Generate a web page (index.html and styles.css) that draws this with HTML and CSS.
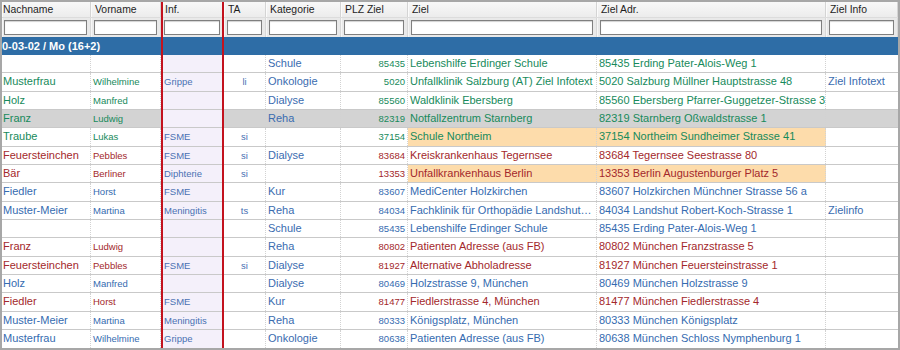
FILE: index.html
```html
<!DOCTYPE html>
<html>
<head>
<meta charset="utf-8">
<link rel="stylesheet" href="styles.css">
</head>
<body>
<div class="grid">
  <div class="row head">
    <div class="h first">Nachname</div>
    <div class="h">Vorname</div>
    <div class="h">Inf.</div>
    <div class="h">TA</div>
    <div class="h">Kategorie</div>
    <div class="h">PLZ Ziel</div>
    <div class="h">Ziel</div>
    <div class="h">Ziel Adr.</div>
    <div class="h">Ziel Info</div>
  </div>
  <div class="row filters">
    <div class="f first"><input type="text"></div>
    <div class="f"><input type="text"></div>
    <div class="f"><input type="text"></div>
    <div class="f"><input type="text"></div>
    <div class="f"><input type="text"></div>
    <div class="f"><input type="text"></div>
    <div class="f"><input type="text"></div>
    <div class="f"><input type="text"></div>
    <div class="f"><input type="text"></div>
  </div>
  <div class="group">0-03-02 / Mo (16+2)</div>

  <div class="row green">
    <div class="c name"></div><div class="c small"></div><div class="c inf"></div><div class="c ta"></div>
    <div class="c kat">Schule</div><div class="c plz">85435</div><div class="c ziel">Lebenshilfe Erdinger Schule</div><div class="c adr">85435 Erding Pater-Alois-Weg 1</div><div class="c info"></div>
  </div>
  <div class="row green">
    <div class="c name">Musterfrau</div><div class="c small">Wilhelmine</div><div class="c inf">Grippe</div><div class="c ta">li</div>
    <div class="c kat">Onkologie</div><div class="c plz">5020</div><div class="c ziel">Unfallklinik Salzburg (AT) Ziel Infotext</div><div class="c adr">5020 Salzburg Müllner Hauptstrasse 48</div><div class="c info">Ziel Infotext</div>
  </div>
  <div class="row green">
    <div class="c name">Holz</div><div class="c small">Manfred</div><div class="c inf"></div><div class="c ta"></div>
    <div class="c kat">Dialyse</div><div class="c plz">85560</div><div class="c ziel">Waldklinik Ebersberg</div><div class="c adr">85560 Ebersberg Pfarrer-Guggetzer-Strasse 3</div><div class="c info"></div>
  </div>
  <div class="row green grey">
    <div class="c name">Franz</div><div class="c small">Ludwig</div><div class="c inf"></div><div class="c ta"></div>
    <div class="c kat">Reha</div><div class="c plz">82319</div><div class="c ziel">Notfallzentrum Starnberg</div><div class="c adr">82319 Starnberg Oßwaldstrasse 1</div><div class="c info"></div>
  </div>
  <div class="row green">
    <div class="c name">Traube</div><div class="c small">Lukas</div><div class="c inf">FSME</div><div class="c ta">si</div>
    <div class="c kat"></div><div class="c plz">37154</div><div class="c ziel hl">Schule Northeim</div><div class="c adr hl">37154 Northeim Sundheimer Strasse 41</div><div class="c info"></div>
  </div>
  <div class="row red">
    <div class="c name">Feuersteinchen</div><div class="c small">Pebbles</div><div class="c inf">FSME</div><div class="c ta">si</div>
    <div class="c kat">Dialyse</div><div class="c plz">83684</div><div class="c ziel">Kreiskrankenhaus Tegernsee</div><div class="c adr">83684 Tegernsee Seestrasse 80</div><div class="c info"></div>
  </div>
  <div class="row red">
    <div class="c name">Bär</div><div class="c small">Berliner</div><div class="c inf">Diphterie</div><div class="c ta">si</div>
    <div class="c kat"></div><div class="c plz">13353</div><div class="c ziel hl">Unfallkrankenhaus Berlin</div><div class="c adr hl">13353 Berlin Augustenburger Platz 5</div><div class="c info"></div>
  </div>
  <div class="row blue">
    <div class="c name">Fiedler</div><div class="c small">Horst</div><div class="c inf">FSME</div><div class="c ta"></div>
    <div class="c kat">Kur</div><div class="c plz">83607</div><div class="c ziel">MediCenter Holzkirchen</div><div class="c adr">83607 Holzkirchen Münchner Strasse 56 a</div><div class="c info"></div>
  </div>
  <div class="row blue">
    <div class="c name">Muster-Meier</div><div class="c small">Martina</div><div class="c inf">Meningitis</div><div class="c ta">ts</div>
    <div class="c kat">Reha</div><div class="c plz">84034</div><div class="c ziel">Fachklinik für Orthopädie Landshut GmbH</div><div class="c adr">84034 Landshut Robert-Koch-Strasse 1</div><div class="c info">Zielinfo</div>
  </div>
  <div class="row blue">
    <div class="c name"></div><div class="c small"></div><div class="c inf"></div><div class="c ta"></div>
    <div class="c kat">Schule</div><div class="c plz">85435</div><div class="c ziel">Lebenshilfe Erdinger Schule</div><div class="c adr">85435 Erding Pater-Alois-Weg 1</div><div class="c info"></div>
  </div>
  <div class="row red">
    <div class="c name">Franz</div><div class="c small">Ludwig</div><div class="c inf"></div><div class="c ta"></div>
    <div class="c kat">Reha</div><div class="c plz">80802</div><div class="c ziel">Patienten Adresse (aus FB)</div><div class="c adr">80802 München Franzstrasse 5</div><div class="c info"></div>
  </div>
  <div class="row red">
    <div class="c name">Feuersteinchen</div><div class="c small">Pebbles</div><div class="c inf">FSME</div><div class="c ta">si</div>
    <div class="c kat">Dialyse</div><div class="c plz">81927</div><div class="c ziel">Alternative Abholadresse</div><div class="c adr">81927 München Feuersteinstrasse 1</div><div class="c info"></div>
  </div>
  <div class="row blue">
    <div class="c name">Holz</div><div class="c small">Manfred</div><div class="c inf"></div><div class="c ta"></div>
    <div class="c kat">Dialyse</div><div class="c plz">80469</div><div class="c ziel">Holzstrasse 9, München</div><div class="c adr">80469 München Holzstrasse 9</div><div class="c info"></div>
  </div>
  <div class="row red">
    <div class="c name">Fiedler</div><div class="c small">Horst</div><div class="c inf">FSME</div><div class="c ta"></div>
    <div class="c kat">Kur</div><div class="c plz">81477</div><div class="c ziel">Fiedlerstrasse 4, München</div><div class="c adr">81477 München Fiedlerstrasse 4</div><div class="c info"></div>
  </div>
  <div class="row blue">
    <div class="c name">Muster-Meier</div><div class="c small">Martina</div><div class="c inf">Meningitis</div><div class="c ta"></div>
    <div class="c kat">Reha</div><div class="c plz">80333</div><div class="c ziel">Königsplatz, München</div><div class="c adr">80333 München Königsplatz</div><div class="c info"></div>
  </div>
  <div class="row blue last">
    <div class="c name">Musterfrau</div><div class="c small">Wilhelmine</div><div class="c inf">Grippe</div><div class="c ta"></div>
    <div class="c kat">Onkologie</div><div class="c plz">80638</div><div class="c ziel">Patienten Adresse (aus FB)</div><div class="c adr">80638 München Schloss Nymphenburg 1</div><div class="c info"></div>
  </div>

  <div class="marker"></div>
</div>
</body>
</html>
```
FILE: styles.css
```css
html, body {
  margin: 0;
  padding: 0;
  background: #ffffff;
}

.grid {
  position: relative;
  width: 900px;
  height: 350px;
  box-sizing: border-box;
  border: 2px solid #a7a7a7;
  overflow: hidden;
  font-family: "Liberation Sans", Arial, sans-serif;
  font-size: 11px;
  background: #ffffff;
}

.row {
  display: grid;
  grid-template-columns: 89px 70px 63px 42px 75px 67px 189px 229px 72px;
  height: 18.33px;
  box-sizing: border-box;
  border-bottom: 1px solid #c9c9c9;
}

.row.last {
  border-bottom: none;
}

/* header */
.row.head {
  height: 16.33px;
  border-bottom: 1px solid #dcdcdc;
  background: linear-gradient(#f8f8f8, #ececec);
}

.h {
  font-size: 10.4px;
  line-height: 15px;
  color: #1e1e1e;
  padding-left: 4px;
  border-right: 1px solid #d4d4d4;
  box-shadow: inset 1px 0 0 #fbfbfb;
  white-space: nowrap;
  overflow: hidden;
}

.h.first {
  padding-left: 1px;
}

/* filter row */
.row.filters {
  background: #e9e9e9;
  border-bottom: none;
}

.f {
  padding: 2px 3px 0 3px;
  border-right: 1px solid #d8d8d8;
  box-shadow: inset 1px 0 0 #f6f6f6;
}

.f.first {
  padding-left: 2px;
}

.f input {
  display: block;
  width: 100%;
  height: 15px;
  box-sizing: border-box;
  margin: 0;
  padding: 0 2px;
  border: 1px solid #7f7f7f;
  border-radius: 0;
  background: #ffffff;
  box-shadow: inset 0 1px 1px rgba(0, 0, 0, 0.18);
  font: inherit;
}

/* group row */
.group {
  height: 18.33px;
  box-sizing: border-box;
  background: #2e6da6;
  color: #ffffff;
  font-weight: bold;
  font-size: 11px;
  line-height: 18px;
  padding-left: 0;
  white-space: nowrap;
}

/* data cells */
.c {
  padding: 0 2px;
  line-height: 17px;
  white-space: nowrap;
  overflow: hidden;
  border-right: 1px dotted #d2d2d2;
}

.c.ziel {
  text-overflow: ellipsis;
}

.c.adr {
  padding-right: 0;
  text-overflow: clip;
}

.c.name {
  padding-left: 1px;
}

.c.small {
  font-size: 9.5px;
}

.c.inf {
  font-size: 9.5px;
  color: #4a70b3;
  background: #f4f0fa;
  padding-left: 3px;
}

.c.ta {
  font-size: 9.5px;
  color: #4a70b3;
  text-align: center;
}

.c.kat {
  color: #3a6cb0;
  padding-left: 2px;
}

.c.plz {
  font-size: 9.5px;
  text-align: right;
}

.c.info {
  color: #3a6cb0;
  border-right: none;
}

.c.hl {
  background: #fddcab;
}

.row.grey {
  background: #d3d3d3;
}

.row.green {
  color: #178a5b;
}

.row.red {
  color: #a3282b;
}

.row.blue {
  color: #356bb0;
}

/* highlighted column frame lying over the grid */
.marker {
  position: absolute;
  left: 159px;
  top: -2px;
  width: 63px;
  height: 350px;
  box-sizing: border-box;
  border: 2px solid #c3121e;
  pointer-events: none;
}
```
